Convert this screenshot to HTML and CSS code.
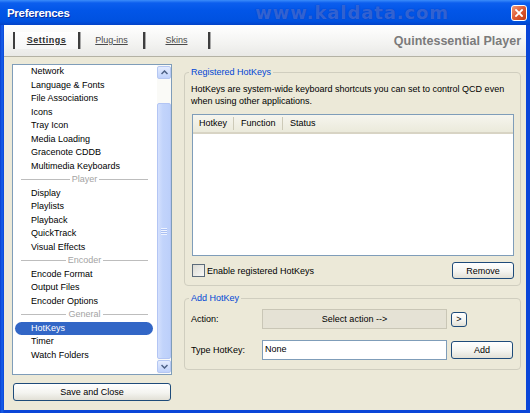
FILE: index.html
```html
<!DOCTYPE html>
<html lang="en">
<head>
    <meta charset="UTF-8">
    <title>Preferences</title>
    <link rel="stylesheet" href="styles.css">
</head>
<body>
    <div class="window">
        <div class="titlebar">
            <span class="title">Preferences</span>
            <span class="watermark">www.kaldata.com</span>
            <span class="close">
                <svg width="8" height="8" viewBox="0 0 8 8"><path d="M1 1 L7 7 M7 1 L1 7" stroke="#fff" stroke-width="1.8" stroke-linecap="square"/></svg>
            </span>
        </div>

        <div class="client">
            <div class="header">
                <nav class="tabs">
                    <span class="sep"></span>
                    <a class="tab active">Settings</a>
                    <span class="sep"></span>
                    <a class="tab">Plug-ins</a>
                    <span class="sep"></span>
                    <a class="tab">Skins</a>
                    <span class="sep"></span>
                </nav>
                <div class="brand">Quintessential Player</div>
            </div>

            <div class="main">
                <div class="sidebar">
                    <div class="listbox">
                        <ul class="items">
                            <li>Network</li>
                            <li>Language &amp; Fonts</li>
                            <li>File Associations</li>
                            <li>Icons</li>
                            <li>Tray Icon</li>
                            <li>Media Loading</li>
                            <li>Gracenote CDDB</li>
                            <li>Multimedia Keyboards</li>
                            <li class="divider"><span>Player</span></li>
                            <li>Display</li>
                            <li>Playlists</li>
                            <li>Playback</li>
                            <li>QuickTrack</li>
                            <li>Visual Effects</li>
                            <li class="divider"><span>Encoder</span></li>
                            <li>Encode Format</li>
                            <li>Output Files</li>
                            <li>Encoder Options</li>
                            <li class="divider"><span>General</span></li>
                            <li class="selected">HotKeys</li>
                            <li>Timer</li>
                            <li>Watch Folders</li>
                        </ul>
                        <div class="scrollbar">
                            <div class="sb-btn">
                                <svg width="7" height="5" viewBox="0 0 7 5"><path d="M0.5 4 L3.5 1 L6.5 4" fill="none" stroke="#4D6185" stroke-width="1.5"/></svg>
                            </div>
                            <div class="sb-thumb"><span class="grip"></span></div>
                            <div class="sb-btn">
                                <svg width="7" height="5" viewBox="0 0 7 5"><path d="M0.5 1 L3.5 4 L6.5 1" fill="none" stroke="#4D6185" stroke-width="1.5"/></svg>
                            </div>
                        </div>
                    </div>
                    <button class="btn save">Save and Close</button>
                </div>

                <div class="content">
                    <fieldset class="group">
                        <legend>Registered HotKeys</legend>
                        <p class="desc">HotKeys are system-wide keyboard shortcuts you can set to control QCD even when using other applications.</p>
                        <div class="listview">
                            <div class="lv-head">
                                <span class="col c1">Hotkey</span>
                                <span class="col c2">Function</span>
                                <span class="col c3">Status</span>
                            </div>
                        </div>
                        <div class="lv-foot">
                            <label class="check"><span class="box"></span>Enable registered HotKeys</label>
                            <button class="btn wide">Remove</button>
                        </div>
                    </fieldset>

                    <fieldset class="group add">
                        <legend>Add HotKey</legend>
                        <div class="form-row">
                            <span class="label">Action:</span>
                            <span class="select-box">Select action --&gt;</span>
                            <button class="btn small">&gt;</button>
                        </div>
                        <div class="form-row second">
                            <span class="label">Type HotKey:</span>
                            <span class="input">None</span>
                            <button class="btn wide">Add</button>
                        </div>
                    </fieldset>
                </div>
            </div>
        </div>
    </div>
</body>
</html>
```

FILE: styles.css
```css
* {
    box-sizing: border-box;
}
body {
    margin: 0;
    font-family: "Liberation Sans", Arial, sans-serif;
    font-size: 9px;
    color: #000;
    background: #fff;
}
.window {
    width: 530px;
    height: 413px;
    display: flex;
    flex-direction: column;
    background: linear-gradient(90deg, #0A3FCF, #1660EA 2px, #0A46D8 4px);
}

/* title bar */
.titlebar {
    height: 25px;
    display: flex;
    align-items: center;
    padding: 0 3px 0 7px;
    background: linear-gradient(#3B8CFA 0, #0C5EEE 3px, #0256E8 40%, #0051E0 85%, #0343C8 100%);
}
.title {
    color: #fff;
    font-weight: bold;
    font-size: 11.5px;
    letter-spacing: -0.3px;
    text-shadow: 1px 1px #0A2E9E;
}
.watermark {
    margin-left: auto;
    margin-right: 62px;
    font-family: "DejaVu Sans", sans-serif;
    font-weight: bold;
    font-size: 18px;
    letter-spacing: 0.9px;
    color: rgba(110, 155, 250, 0.45);
    text-shadow: 0 0 1px #0535B0;
}
.close {
    width: 16px;
    height: 16px;
    margin-top: 1px;
    display: flex;
    align-items: center;
    justify-content: center;
    border: 1px solid #fff;
    border-radius: 3px;
    background: linear-gradient(135deg, #F09A7A, #DE5A33 50%, #C23C14);
}

/* client area */
.client {
    flex: 1;
    margin: 0 4px 3px;
    display: flex;
    flex-direction: column;
    background: #ECE9D8;
}
.header {
    height: 32px;
    display: flex;
    align-items: center;
    justify-content: space-between;
    padding: 0 5px 1px 9px;
    background: linear-gradient(#FFFFFF, #F3F3F1 60%, #E9E9E6);
    border-bottom: 1px solid #B4B2A4;
}
.tabs {
    display: flex;
    align-items: center;
}
.sep {
    width: 2px;
    height: 17px;
    background: #3E3E3E;
    box-shadow: 1px 0 #A8A8A8;
}
.tab {
    width: 63px;
    height: 17px;
    line-height: 17px;
    text-align: center;
    color: #4A4A4A;
    text-decoration: underline;
}
.tab.active {
    font-weight: bold;
    letter-spacing: 0.5px;
    color: #2E2E2E;
    background: linear-gradient(#FFFFFF, #F6F6F6);
}
.brand {
    font-weight: bold;
    font-size: 12.5px;
    color: #7B7B7B;
    margin-top: 1px;
}

.main {
    flex: 1;
    display: flex;
    gap: 12px;
    padding: 7px 5px 0 8px;
}

/* left list */
.sidebar {
    width: 160px;
    display: flex;
    flex-direction: column;
}
.listbox {
    height: 311px;
    display: flex;
    border: 1px solid #7F9DB9;
    background: #fff;
}
.items {
    flex: 1;
    list-style: none;
    margin: 0;
    padding: 0;
}
.items li {
    height: 13.5px;
    line-height: 13.5px;
    padding-left: 18px;
    white-space: nowrap;
}
.items li.selected {
    margin: 0 4px 0 2px;
    padding-left: 16px;
    color: #fff;
    background: #3266C6;
    border-radius: 7px;
}
.items li.divider {
    display: flex;
    align-items: center;
    gap: 2px;
    padding: 0 9px 0 8px;
    color: #A4A4A4;
}
.items li.divider::before,
.items li.divider::after {
    content: "";
    flex: 1;
    height: 1px;
    background: #BDBDBD;
}
.scrollbar {
    width: 14px;
    display: flex;
    flex-direction: column;
    padding: 1px 0;
    background: #FAFAF7;
}
.sb-btn {
    height: 13px;
    display: flex;
    align-items: center;
    justify-content: center;
    border: 1px solid #B5C7F2;
    border-radius: 2px;
    background: linear-gradient(#E4ECFE, #C0D2FB);
}
.sb-thumb {
    flex: 1;
    margin: 24px 0 1px;
    display: flex;
    align-items: center;
    justify-content: center;
    border: 1px solid #B3C5F4;
    border-radius: 2px;
    background: linear-gradient(90deg, #D4E0FD, #C2D4FB 40%, #BCCFFA);
}
.grip {
    width: 6px;
    height: 7px;
    background: repeating-linear-gradient(#EEF3FF 0, #EEF3FF 1px, #A9BFF2 1px, #A9BFF2 2px);
}

/* buttons */
.btn {
    font-family: inherit;
    font-size: 9px;
    color: #000;
    padding: 0;
    border: 1px solid #1E4B7A;
    border-radius: 3px;
    background: linear-gradient(#FFFFFF, #F4F4F0 55%, #E2E0D6);
}
.save {
    height: 18px;
    margin: 8px 1px 0;
}
.wide {
    width: 62px;
    height: 17px;
}
.small {
    width: 16px;
    height: 15px;
    margin-left: 4px;
}

/* right panel */
.content {
    flex: 1;
    padding-top: 2px;
}
.group {
    margin: 0;
    padding: 0 6px 6px;
    border: 1px solid #D0CEBF;
    border-radius: 4px;
}
.group legend {
    padding: 0 2px;
    margin-left: -2px;
    line-height: 13px;
    color: #0046D5;
}
.desc {
    margin: 4px 0 0;
    line-height: 12px;
}
.listview {
    height: 142px;
    margin: 7px 0 0 1px;
    border: 1px solid #7F9DB9;
    background: #fff;
}
.lv-head {
    height: 19px;
    display: flex;
    align-items: center;
    background: linear-gradient(#F6F5EE, #EBEADB);
    border-bottom: 2px solid #D8D4C4;
}
.col {
    height: 13px;
    line-height: 13px;
    padding-left: 7px;
}
.c1 {
    width: 41px;
    padding-left: 6px;
    border-right: 1px solid #CDCAB8;
}
.c2 {
    width: 49px;
    border-right: 1px solid #CDCAB8;
}
.lv-foot {
    height: 17px;
    margin-top: 6px;
    display: flex;
    align-items: center;
    justify-content: space-between;
}
.check {
    display: flex;
    align-items: center;
    gap: 2px;
    margin-left: 1px;
}
.box {
    width: 13px;
    height: 13px;
    border: 1px solid #5C6B7A;
    background: linear-gradient(135deg, #DCDBD3, #F8F8F6);
}
.add {
    margin-top: 6px;
    padding-bottom: 9px;
}
.form-row {
    display: flex;
    align-items: center;
    margin-top: 4px;
}
.form-row.second {
    margin-top: 11px;
}
.label {
    width: 71px;
}
.select-box {
    width: 185px;
    height: 20px;
    line-height: 18px;
    text-align: center;
    border: 1px solid #C9C6B6;
    background: #E5E2D5;
}
.input {
    width: 185px;
    height: 20px;
    line-height: 16px;
    padding-left: 2px;
    border: 1px solid #7F9DB9;
    background: #fff;
}
.form-row.second .btn {
    height: 18px;
    margin-left: 4px;
}
```
